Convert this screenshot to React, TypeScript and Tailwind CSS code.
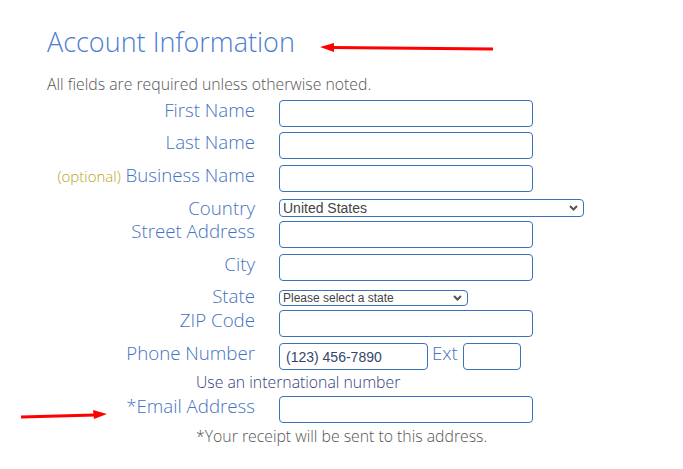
import React from 'react'

const labelCls =
  'w-[255px] shrink-0 text-right text-[18.7px] leading-[20px] font-light text-[#4573c0]'
const inputCls =
  'block h-[27px] rounded-[4px] border-[1.5px] border-[#3b72b8] bg-white outline-none px-[6px]'

function Chevron() {
  return (
    <svg
      width="9"
      height="6"
      viewBox="0 0 9 6"
      className="pointer-events-none absolute right-[6px] top-1/2 -translate-y-1/2"
    >
      <path d="M1 1 L4.5 4.5 L8 1" fill="none" stroke="#555" strokeWidth="2" />
    </svg>
  )
}

interface IRow {
  label: React.ReactNode
  className?: string
  children: React.ReactNode
}

const Row = ({ label, className, children }: IRow) => {
  return (
    <div className={`flex items-start ${className ?? ''}`}>
      <div className={labelCls}>{label}</div>
      <div className="ml-6 flex items-start">{children}</div>
    </div>
  )
}

const TextInput = ({ w = 'w-[254px]' }: { w?: string }) => (
  <input type="text" className={`${inputCls} ${w}`} />
)

export default function App() {
  return (
    <div className="relative min-h-[469px] w-[683px] bg-white font-['Open_Sans',sans-serif]">
      <h1 className="pl-[47px] pt-[24px] text-[27px] leading-[36px] font-light text-[#4d7dd2]">
        Account Information
      </h1>
      <p className="mt-[14px] pl-[47px] text-[15.8px] leading-[20px] font-light text-[#555]">
        All fields are required unless otherwise noted.
      </p>

      <form className="flex flex-col">
        <Row label="First Name" className="mt-[6px]">
          <TextInput />
        </Row>
        <Row label="Last Name" className="mt-[5px]">
          <TextInput />
        </Row>
        <Row
          label={
            <>
              <span className="text-[15px] text-[#b5a51c]">(optional)</span> Business Name
            </>
          }
          className="mt-[6px]"
        >
          <TextInput />
        </Row>
        <Row label="Country" className="mt-[6px]">
          <div className="relative mt-[1px]">
            <select className="block h-[18px] w-[305px] appearance-none rounded-[4px] border-[1.5px] border-[#3b72b8] bg-white pl-[3px] font-['Liberation_Sans',Arial,sans-serif] text-[14px] leading-[14px] text-[#444] outline-none">
              <option>United States</option>
            </select>
            <Chevron />
          </div>
        </Row>
        <Row label="Street Address" className="mt-[3px]">
          <TextInput />
        </Row>
        <Row label="City" className="mt-[6px]">
          <TextInput />
        </Row>
        <Row label="State" className="mt-[5px]">
          <div className="relative mt-[4px]">
            <select className="block h-[16px] w-[189px] appearance-none rounded-[4px] border-[1.5px] border-[#3b72b8] bg-white pl-[3px] font-['Liberation_Sans',Arial,sans-serif] text-[12px] leading-[12px] text-[#444] outline-none">
              <option>Please select a state</option>
            </select>
            <Chevron />
          </div>
        </Row>
        <Row label="ZIP Code" className="mt-[4px]">
          <TextInput />
        </Row>
        <Row label="Phone Number" className="mt-[6px]">
          <input
            type="text"
            defaultValue="(123) 456-7890"
            className={`${inputCls} w-[149px] font-['Liberation_Sans',Arial,sans-serif] text-[14px] text-[#33466a]`}
          />
          <span className="ml-[4px] text-[18.7px] leading-[20px] font-light text-[#4573c0]">Ext</span>
          <input type="text" className={`${inputCls} ml-[5px] w-[58px]`} />
        </Row>
        <p className="mt-[2px] pl-[196px] text-[15.8px] leading-[20px] font-light text-[#33407a]">
          Use an international number
        </p>
        <Row label="*Email Address" className="mt-[4px]">
          <TextInput />
        </Row>
        <p className="mt-[3px] pl-[196px] text-[15.8px] leading-[20px] font-light text-[#555]">
          *Your receipt will be sent to this address.
        </p>
      </form>

      <svg className="pointer-events-none absolute left-0 top-0" width="683" height="469">
        <line x1="493" y1="49" x2="332" y2="47.5" stroke="#f00" strokeWidth="3" />
        <polygon points="320,47 334,43 334,52" fill="#f00" />
        <line x1="21" y1="417" x2="95" y2="415" stroke="#f00" strokeWidth="3" />
        <polygon points="107,414 93,410 94,419" fill="#f00" />
      </svg>
    </div>
  )
}
